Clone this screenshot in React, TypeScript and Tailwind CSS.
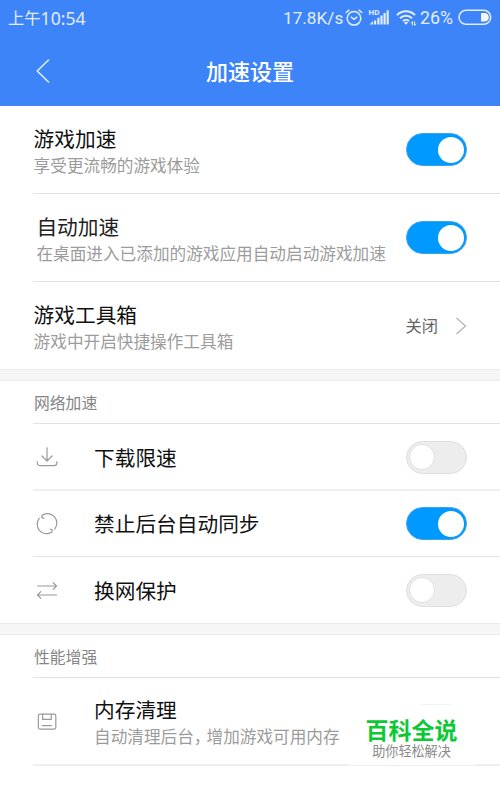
import React from "react";

const FONT = "font-['Noto_Sans_CJK_SC','Noto_Sans',sans-serif]";

function Toggle({ on = false }: { on?: boolean }) {
  return (
    <div
      className={
        on
          ? "flex h-[33px] w-[61px] shrink-0 items-center justify-end rounded-full border border-[#3fa3ea] bg-[#0099ff] pr-[2px]"
          : "flex h-[33px] w-[61px] shrink-0 items-center rounded-full border border-[#dfdfdf] bg-[#ededed] pl-[2px]"
      }
    >
      <div className={on ? "size-[26px] rounded-full bg-white" : "size-[26px] rounded-full border border-[#e1e1e1] bg-white"} />
    </div>
  );
}

function Label({ title, sub, dark = "text-[#111]" }: { title: string; sub?: React.ReactNode; dark?: string }) {
  return (
    <div className={"min-w-0 flex-1 whitespace-nowrap " + (sub ? "pt-[3px]" : "pb-px")}>
      <div className={"text-[20.7px] leading-[26px] " + dark}>{title}</div>
      {sub && <div className="pt-px text-[16.65px] leading-[26px] text-[#9c9c9c]">{sub}</div>}
    </div>
  );
}

function Gap() {
  return <div className="h-3 border-y border-[#ebebeb] bg-[#f6f6f6]" />;
}

function Heading({ children }: { children: string }) {
  return (
    <div className="ml-[33px] h-[43px] border-b border-[#e2e2e2] pl-px text-[15.8px] leading-[43px] text-[#858585]">{children}</div>
  );
}

function IconRow({ icon, title, on, className }: { icon: React.ReactNode; title: string; on?: boolean; className: string }) {
  return (
    <div className={"ml-[33px] flex items-center pr-[33px] " + className}>
      <div className="w-[61px] shrink-0 pl-[2px]">{icon}</div>
      <Label title={title} />
      <Toggle on={on} />
    </div>
  );
}

const iconProps = {
  width: 24,
  height: 24,
  viewBox: "0 0 24 24",
  fill: "none",
  stroke: "#9a9a9a",
  strokeWidth: 1.2,
  strokeLinecap: "round" as const,
  strokeLinejoin: "round" as const,
};

function StatusIcons() {
  return (
    <>
      <svg className="absolute left-[345px] top-[9px]" width="18" height="18" viewBox="0 0 18 18" fill="none" stroke="#e3edff" strokeWidth="1.5" strokeLinecap="round">
        <circle cx="9" cy="9.3" r="6.8" />
        <path d="M1.2 3.5 4 1.2M16.8 3.5 14 1.2M6.2 8.2 9 10.4l2.8-2.2" />
      </svg>
      <svg className="absolute left-[368px] top-[9px]" width="22" height="17" viewBox="0 0 22 17" fill="#e3edff">
        <text x="0.6" y="6.3" fontSize="8" fontWeight="700" textLength="11" lengthAdjust="spacingAndGlyphs" fontFamily="Roboto, sans-serif">HD</text>
        <path d="M1.5 15.5 5 12v3.5zM6 11.4h2.2v4.1H6zM9.3 8.8h2.2v6.7H9.3zM12.4 6.5h2.2v9h-2.2zM15.5 4h2.2v11.5h-2.2zM18.6 1.2h2.2v14.3h-2.2z" />
      </svg>
      <svg className="absolute left-[396px] top-[9px]" width="22" height="18" viewBox="0 0 22 18" fill="none" stroke="#e3edff" strokeWidth="2">
        <path d="M1 6.1a12.5 12.5 0 0 1 18 0M4 9.2a8.5 8.5 0 0 1 12 0M7 12.1a4.4 4.4 0 0 1 6 0" />
        <path d="m7.8 13.5 2.2 2.3 2.2-2.3q-2.2-1.7-4.4 0Z" fill="#e3edff" stroke="none" />
        <path d="M16.5 16.5v-4l-1.4 1.7M18.6 12.5v4l1.4-1.7" strokeWidth="1" />
      </svg>
      <svg className="absolute left-[458px] top-[9px]" width="34" height="17" viewBox="0 0 34 17">
        <rect x="1" y="1.3" width="31.7" height="14" rx="7" fill="none" stroke="#e3edff" strokeWidth="1.5" />
        <path d="M23 4h3.5a4.3 4.3 0 0 1 0 8.6H23z" fill="#f3f7ff" />
      </svg>
    </>
  );
}

export default function App() {
  return (
    <div className={"relative h-[790px] w-[500px] overflow-hidden bg-white " + FONT}>
      <header className="h-[106px] bg-[#3c84f8] text-white">
        <div className="relative h-9 text-[#e3edff]">
          <span className="absolute left-[8px] top-[5px] flex text-[16.3px] leading-[25px]">
            上午<span className="font-[Noto_Sans,sans-serif] text-[17.6px] leading-[27px]">10:54</span>
          </span>
          <span className="absolute left-[283px] top-[5px] font-[Roboto,sans-serif] text-[17.2px] leading-[27px]">17.8K/s</span>
          <span className="absolute left-[420px] top-[4px] font-[Roboto,sans-serif] text-[17.8px] leading-[27px]">26%</span>
          <StatusIcons />
        </div>
        <div className="flex h-[70px] items-center">
          <svg className="ml-[34px]" width="18" height="26" viewBox="0 0 18 26" fill="none" stroke="#e3edff" strokeWidth="1.6" strokeLinecap="round" strokeLinejoin="round">
            <path d="M14.5 2 3.2 13l11.3 11" />
          </svg>
          <h1 className="ml-[154px] pb-[2px] text-[22px] leading-[30px] font-medium">加速设置</h1>
        </div>
      </header>

      <div className="ml-[33px] flex h-[88px] items-center border-b border-[#e2e2e2] pr-[33px] pl-[0.6px]">
        <Label title="游戏加速" sub="享受更流畅的游戏体验" />
        <Toggle on />
      </div>
      <div className="ml-[33px] flex h-[88px] items-center border-b border-[#e2e2e2] pr-[33px] pl-[3.4px]">
        <Label title="自动加速" sub="在桌面进入已添加的游戏应用自动启动游戏加速" dark="text-[#222]" />
        <Toggle on />
      </div>
      <div className="ml-[33px] flex h-[87px] items-center pr-[33px] pl-[0.6px]">
        <Label title="游戏工具箱" sub="游戏中开启快捷操作工具箱" />
        <span className="pb-px text-[16.3px] leading-6 text-[#666]">关闭</span>
        <svg className="ml-[17px]" width="12" height="18" viewBox="0 0 12 18" fill="none" stroke="#b5b5b5" strokeWidth="1.3">
          <path d="m1.5 1 9 8-9 8" />
        </svg>
      </div>

      <Gap />
      <Heading>网络加速</Heading>
      <IconRow
        className="h-[67px] border-b-2 border-[#efefef] pt-px"
        title="下载限速"
        icon={
          <svg {...iconProps}>
            <path d="M12 2.8v13M7 11l5 5 5-5M2.3 16.5v1.2a3 3 0 0 0 3 3h13.6a3 3 0 0 0 3-3v-1.2" />
          </svg>
        }
      />
      <IconRow
        className="h-[66px] border-b border-[#e4e4e4]"
        title="禁止后台自动同步"
        on
        icon={
          <svg {...iconProps}>
            <path d="M7.9 2.9a9.4 9.4 0 0 1 11.8 14.2M16.1 20.5A9.4 9.4 0 0 1 4.3 6.3M7.1 3.2l-.4 2.2 2.1 1M16.9 20.2l.4-2.2-2.1-1" />
          </svg>
        }
      />
      <IconRow
        className="h-[66px]"
        title="换网保护"
        icon={
          <svg {...iconProps}>
            <path d="M2.5 8h19M18.2 4.7l3.3 3.3-3.3 3.3M21.5 17h-19M5.8 13.7l-3.3 3.3 3.3 3.3" />
          </svg>
        }
      />

      <Gap />
      <Heading>性能增强</Heading>
      <div className="ml-[33px] flex h-[88px] items-center border-b-2 border-[#efefef]">
        <div className="w-[61px] shrink-0 pt-px pl-[2px]">
          <svg {...iconProps}>
            <rect x="3.4" y="4.2" width="17.4" height="15" rx="1.8" />
            <path d="M7.6 4.2v5.2h8.6V4.2M7.4 15.6h9" />
          </svg>
        </div>
        <Label
          title="内存清理"
          sub={
            <>
              自动清理后台<span className="tracking-[-4px]">，</span>增加游戏可用内存
            </>
          }
        />
      </div>

      <div className="absolute left-[350px] top-[704px] flex h-[61px] w-[125px] flex-col items-center bg-white pr-[2px] whitespace-nowrap">
        <div className="ml-[49px] h-px w-8 bg-[#e8f5ff]" />
        <div className="mt-[11px] text-[23px] leading-[26px] font-bold text-[#0ac935]">百科全说</div>
        <div className="mt-px text-[13.1px] leading-[16px] text-[#8a8a8a]">助你轻松解决</div>
      </div>
    </div>
  );
}
